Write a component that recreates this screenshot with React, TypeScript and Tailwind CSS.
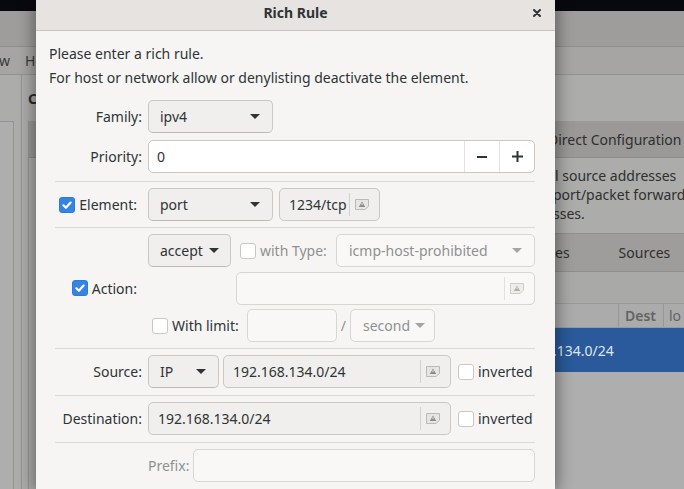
import React from "react";

function Arrow({ grey = false }: { grey?: boolean }) {
  return (
    <svg width="10" height="5" viewBox="0 0 10 5" className="shrink-0">
      <path d="M0 0 H10 L5 5 Z" fill={grey ? "#a3a5a5" : "#2e3436"} />
    </svg>
  );
}

function EntryIcon({ faded = false }: { faded?: boolean }) {
  return (
    <svg width="16" height="11" viewBox="0 0 16 11" className="shrink-0">
      <path
        d="M1.5 0.5 H14.5 V7.2 L11.2 10.5 H1.5 Z"
        fill={faded ? "#efedeb" : "#e7e5e3"}
        stroke={faded ? "#cfcbc7" : "#bcb8b4"}
      />
      <path d="M8 2.4 L11.2 8 H4.8 Z" fill={faded ? "#b3afab" : "#8d8985"} />
      <path d="M8 4.2 V6.1" stroke="#eeecea" strokeWidth="1" />
    </svg>
  );
}

function Check({ checked = false }: { checked?: boolean }) {
  if (checked) {
    return (
      <span className="w-4 h-4 shrink-0 rounded-[3px] bg-[#3584e4] border border-[#2b79d9] flex items-center justify-center">
        <svg width="12" height="12" viewBox="0 0 12 12">
          <path
            d="M2.4 6.3 L4.9 8.7 L9.6 3.6"
            fill="none"
            stroke="#ffffff"
            strokeWidth="2.2"
            strokeLinecap="round"
            strokeLinejoin="round"
          />
        </svg>
      </span>
    );
  }
  return <span className="block w-4 h-4 shrink-0 rounded-[3px] bg-white border border-[#cdc7c2]" />;
}

function IconEntry({
  text,
  className,
  faded = false,
}: {
  text?: string;
  className: string;
  faded?: boolean;
}) {
  return (
    <div
      className={
        "h-[33px] rounded-[5px] border flex items-center " +
        (faded ? "bg-[#f9f8f7] border-[#d9d5d1] " : "bg-[#f0efed] border-[#cdc7c2] ") +
        className
      }
    >
      <span className="flex-1 pl-[9px] whitespace-nowrap overflow-visible">{text}</span>
      <span className={"w-px h-[23px] " + (faded ? "bg-[#e2dfdc]" : "bg-[#d5d1cd]")} />
      <span className="ml-[4px] mr-[9px] flex items-center">
        <EntryIcon faded={faded} />
      </span>
    </div>
  );
}

export default function App() {
  const label = "w-[87px] shrink-0 text-right";
  const sep = "border-b border-[#dcd8d4]";
  return (
    <div className="relative w-[684px] h-[489px] overflow-hidden bg-[#acacab] font-['Noto_Sans',sans-serif] text-[14px]">
      {/* background window (dimmed) */}
      <div className="flex flex-col h-full">
        <div className="h-[11px] shrink-0 bg-[#08080f]" />
        <div className="h-[36px] shrink-0 bg-[#9f9d9b] border-b border-[#918f8d]" />
        <div className="h-[28px] shrink-0 bg-[#a6a5a3] border-b border-[#939291] flex items-center text-[#3a3a3a] leading-[20px]">
          <span className="-ml-[1px]">w</span>
          <span className="ml-[15px]">He</span>
        </div>
        <div className="flex-1 flex">
          <div className="w-[22px] shrink-0 border-r border-[#939392] flex flex-col">
            <div className="h-[46px] shrink-0" />
            <div className="flex-1 w-[14px] border-t border-r border-[#939392] bg-[#aeaeae]" />
          </div>
          <div className="flex-1 flex flex-col pl-[6px]">
            <div className="h-[46px] shrink-0 flex items-center font-bold text-[#2a2a2a]">C</div>
            <div className="flex-1 flex flex-col border-l border-[#939392]">
              <div className="h-[37px] shrink-0 bg-[#9a9997] border-b border-[#8d8c8a] flex items-center text-[#2f2f2f]">
                <span className="ml-[519px] whitespace-nowrap">Direct Configuration</span>
              </div>
              <div className="h-[75px] shrink-0 pt-[8px] leading-[19px] text-[#303030] whitespace-nowrap">
                <div className="ml-[526px]">l source addresses</div>
                <div className="ml-[524px]">port/packet forward</div>
                <div className="ml-[524px]">sses.</div>
              </div>
              <div className="flex-1 flex flex-col ml-[10px] border-l border-[#8f8f8e]">
                <div className="h-[39px] shrink-0 bg-[#9e9d9b] border-y border-[#8f8e8c] flex items-center text-[#2f2f2f] whitespace-nowrap">
                  <span className="ml-[515px]">es</span>
                  <span className="ml-[49px]">Sources</span>
                </div>
                <div className="h-[31px] shrink-0 bg-[#a9a9a8]" />
                <div className="h-[25px] shrink-0 bg-[#ababab] border-y border-[#999998] flex text-[#646464] font-semibold whitespace-nowrap">
                  <div className="w-[578px] shrink-0" />
                  <div className="w-[45px] shrink-0 border-l border-[#979797] pl-[6px] flex items-center">Dest</div>
                  <div className="border-l border-[#979797] pl-[5px] flex items-center font-normal">lo</div>
                </div>
                <div className="h-[44px] shrink-0 bg-[#2a5a9b] flex items-center text-[#dfe6ef] whitespace-nowrap">
                  <span className="ml-[513px]">.134.0/24</span>
                </div>
                <div className="flex-1 bg-[#aeaeae]" />
              </div>
            </div>
          </div>
        </div>
      </div>

      {/* dialog */}
      <div className="absolute left-[36px] top-0 w-[519px] h-[489px] bg-[#f6f5f4] shadow-[0_0_14px_3px_rgba(0,0,0,0.38)] flex flex-col text-[#2e3436]">
        <div className="h-[31px] shrink-0 bg-[#e6e3e0] border-b border-[#c9c4bf] grid grid-cols-[1fr_auto_1fr] items-center pb-[5px]">
          <div />
          <div className="font-bold leading-[20px]">Rich Rule</div>
          <div className="flex justify-end pr-[14px]">
            <svg width="8" height="8" viewBox="0 0 8 8">
              <path d="M1 1 L7 7 M7 1 L1 7" stroke="#2e3436" strokeWidth="2" strokeLinecap="round" />
            </svg>
          </div>
        </div>

        <div className="pl-[13px] pr-[20px] pt-[13px] flex flex-col">
          <div className="leading-[20px]">Please enter a rich rule.</div>
          <div className="leading-[20px] mt-[4px] whitespace-nowrap">
            For host or network allow or denylisting deactivate the element.
          </div>

          <div className="mt-[12px] ml-[6px] flex flex-col">
            {/* family / priority */}
            <div className={"flex flex-col gap-[7px] pb-[8px] " + sep}>
              <div className="flex items-center h-[33px]">
                <div className={label}>Family:</div>
                <div className="ml-[6px] w-[125px] h-[33px] rounded-[5px] border border-[#cdc7c2] border-b-[#c0b9b2] bg-[#f0efed] flex items-center justify-between pl-[11px] pr-[12px]">
                  <span>ipv4</span>
                  <Arrow />
                </div>
              </div>
              <div className="flex items-center h-[33px]">
                <div className={label}>Priority:</div>
                <div className="ml-[6px] flex-1 h-[33px] rounded-[5px] border border-[#cdc7c2] bg-white flex items-stretch">
                  <span className="flex-1 pl-[8px] flex items-center">0</span>
                  <span className="w-[35px] border-l border-[#e3e0dd] flex items-center justify-center">
                    <svg width="10" height="10" viewBox="0 0 10 10">
                      <path d="M0 5 H10" stroke="#2e3436" strokeWidth="2" />
                    </svg>
                  </span>
                  <span className="w-[35px] border-l border-[#e3e0dd] flex items-center justify-center">
                    <svg width="11" height="11" viewBox="0 0 11 11">
                      <path d="M0 5.5 H11 M5.5 0 V11" stroke="#2e3436" strokeWidth="2" />
                    </svg>
                  </span>
                </div>
              </div>
            </div>

            {/* element */}
            <div className={"pt-[6px] pb-[6px] " + sep}>
              <div className="flex items-center h-[33px]">
                <div className="w-[87px] shrink-0 flex items-center justify-end gap-[4px] pr-[5px]">
                  <Check checked />
                  <span>Element:</span>
                </div>
                <div className="ml-[6px] w-[125px] h-[33px] rounded-[5px] border border-[#cdc7c2] border-b-[#c0b9b2] bg-[#f0efed] flex items-center justify-between pl-[11px] pr-[12px]">
                  <span>port</span>
                  <Arrow />
                </div>
                <IconEntry text="1234/tcp" className="ml-[6px] w-[101px]" />
              </div>
            </div>

            {/* action */}
            <div className={"pt-[6px] pb-[6px] flex " + sep}>
              <div className="w-[87px] shrink-0 flex items-center justify-end gap-[4px] pr-[5px]">
                <Check checked />
                <span>Action:</span>
              </div>
              <div className="ml-[6px] flex-1 flex flex-col">
                <div className="h-[33px] flex items-center">
                  <div className="w-[83px] h-[33px] rounded-[5px] border border-[#cdc7c2] border-b-[#c0b9b2] bg-[#f0efed] flex items-center pl-[11px] gap-[6px]">
                    <span>accept</span>
                    <Arrow />
                  </div>
                  <span className="ml-[9px]">
                    <Check />
                  </span>
                  <span className="ml-[4px] text-[#8e9191]">with Type:</span>
                  <div className="ml-auto w-[199px] h-[33px] rounded-[5px] border border-[#d9d5d1] bg-[#f9f8f7] flex items-center justify-between pl-[12px] pr-[12px] text-[#8e9191]">
                    <span>icmp-host-prohibited</span>
                    <Arrow grey />
                  </div>
                </div>
                <div className="h-[33px] mt-[5px] flex justify-end">
                  <IconEntry faded className="w-[299px]" />
                </div>
                <div className="h-[33px] mt-[4px] flex items-center pl-[4px]">
                  <Check />
                  <span className="ml-[4px]">With limit:</span>
                  <div className="ml-[8px] w-[90px] h-[33px] rounded-[5px] border border-[#d9d5d1] bg-[#f9f8f7]" />
                  <span className="ml-[4px] text-[#8e9191]">/</span>
                  <div className="ml-[4px] w-[85px] h-[33px] rounded-[5px] border border-[#d9d5d1] bg-[#f9f8f7] flex items-center pl-[12px] gap-[5px] text-[#8e9191]">
                    <span>second</span>
                    <Arrow grey />
                  </div>
                </div>
              </div>
            </div>

            {/* source */}
            <div className={"pt-[6px] pb-[7px] " + sep}>
              <div className="flex items-center h-[33px]">
                <div className={label}>Source:</div>
                <div className="ml-[6px] w-[71px] h-[33px] rounded-[5px] border border-[#cdc7c2] border-b-[#c0b9b2] bg-[#f0efed] flex items-center justify-between pl-[11px] pr-[12px]">
                  <span>IP</span>
                  <Arrow />
                </div>
                <IconEntry text="192.168.134.0/24" className="ml-[4px] w-[228px]" />
                <span className="ml-[7px]">
                  <Check />
                </span>
                <span className="ml-[4px]">inverted</span>
              </div>
            </div>

            {/* destination */}
            <div className={"pt-[6px] pb-[7px] " + sep}>
              <div className="flex items-center h-[33px]">
                <div className={label}>Destination:</div>
                <IconEntry text="192.168.134.0/24" className="ml-[6px] w-[303px]" />
                <span className="ml-[7px]">
                  <Check />
                </span>
                <span className="ml-[4px]">inverted</span>
              </div>
            </div>

            {/* prefix */}
            <div className="pt-[6px]">
              <div className="flex items-center h-[33px]">
                <div className={label} />
                <span className="ml-[6px] text-[#8e9191]">Prefix:</span>
                <div className="ml-[4px] flex-1 h-[33px] rounded-[5px] border border-[#d9d5d1] bg-[#f9f8f7]" />
              </div>
            </div>
          </div>
        </div>
      </div>
    </div>
  );
}
